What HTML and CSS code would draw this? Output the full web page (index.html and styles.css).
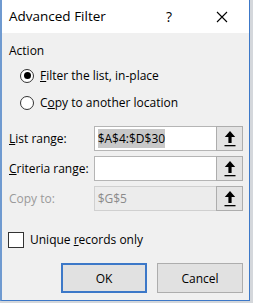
FILE: index.html
```html
<!DOCTYPE html>
<html lang="en">
<head>
    <meta charset="UTF-8">
    <title>Advanced Filter</title>
    <link rel="stylesheet" href="styles.css">
</head>
<body>
    <div class="dialog">
        <div class="titlebar">
            <span class="title">Advanced Filter</span>
            <span class="help">?</span>
            <svg class="close" width="12" height="12" viewBox="0 0 12 12">
                <path d="M1 1 L11 11 M11 1 L1 11" stroke="#000" stroke-width="1.1" fill="none"/>
            </svg>
        </div>

        <div class="content">
            <div class="group">
                <div class="group-label">Action</div>
                <label class="radio-row">
                    <span class="radio checked"></span>
                    <span><u>F</u>ilter the list, in-place</span>
                </label>
                <label class="radio-row">
                    <span class="radio"></span>
                    <span>C<u>o</u>py to another location</span>
                </label>
            </div>

            <div class="field-row">
                <span class="field-label"><u>L</u>ist range:</span>
                <div class="field">
                    <span class="field-input"><span class="selected">$A$4:$D$30</span></span>
                    <span class="pick"><svg width="12" height="17" viewBox="0 0 12 17"><path d="M6 1 L0.8 7 H4.4 V13 H7.6 V7 H11.2 Z" fill="#000"/><rect x="0.5" y="15" width="11" height="1.3" fill="#000"/></svg></span>
                </div>
            </div>
            <div class="field-row">
                <span class="field-label"><u>C</u>riteria range:</span>
                <div class="field">
                    <span class="field-input"></span>
                    <span class="pick"><svg width="12" height="17" viewBox="0 0 12 17"><path d="M6 1 L0.8 7 H4.4 V13 H7.6 V7 H11.2 Z" fill="#000"/><rect x="0.5" y="15" width="11" height="1.3" fill="#000"/></svg></span>
                </div>
            </div>
            <div class="field-row disabled">
                <span class="field-label">Copy to:</span>
                <div class="field">
                    <span class="field-input">$G$5</span>
                    <span class="pick"><svg width="12" height="17" viewBox="0 0 12 17"><path d="M6 1 L0.8 7 H4.4 V13 H7.6 V7 H11.2 Z" fill="#000"/><rect x="0.5" y="15" width="11" height="1.3" fill="#000"/></svg></span>
                </div>
            </div>

            <label class="check-row">
                <span class="checkbox"></span>
                <span>Unique <u>r</u>ecords only</span>
            </label>

            <div class="buttons">
                <span class="button default">OK</span>
                <span class="button">Cancel</span>
            </div>
        </div>
    </div>
</body>
</html>
```

FILE: styles.css
```css
body {
    margin: 0;
    padding: 0;
    background-color: #d4d7db;
    font-family: "Open Sans", "Noto Sans", sans-serif;
    color: #000;
}
.dialog {
    width: 247px;
    height: 300px;
    border-left: 2px solid #6f9ad0;
    border-right: 1px solid #3c78c8;
    border-bottom: 1px solid #3c78c8;
    background-color: #f0f0f0;
    display: flex;
    flex-direction: column;
}
.titlebar {
    height: 33px;
    background-color: #fff;
    display: flex;
    align-items: center;
    padding-left: 7px;
}
.title {
    font-size: 13.5px;
    flex: 1;
    margin-top: -1px;
}
.help {
    font-size: 14px;
    margin-right: 44px;
    margin-top: -1px;
}
.close {
    margin-right: 21px;
}
.content {
    flex: 1;
    padding: 9px 6px 0 6px;
}
.group {
    height: 74px;
    margin-bottom: 7px;
}
.group-label {
    font-size: 12px;
    padding-left: 1px;
    height: 20px;
}
.radio-row {
    display: flex;
    align-items: center;
    gap: 6px;
    font-size: 12px;
    padding-left: 12px;
    height: 27px;
}
.radio {
    width: 12px;
    height: 12px;
    border: 1px solid #333;
    border-radius: 50%;
    background-color: #fff;
    display: flex;
    align-items: center;
    justify-content: center;
}
.radio.checked::after {
    content: "";
    width: 7px;
    height: 7px;
    border-radius: 50%;
    background-color: #000;
}
.field-row {
    display: flex;
    align-items: center;
    height: 30px;
    font-size: 12px;
}
.field-label {
    width: 85px;
    padding-left: 1px;
}
.field {
    display: flex;
    height: 25px;
    width: 150px;
}
.field-input {
    flex: 1;
    background-color: #fff;
    border: 1px solid #b5b5b5;
    border-right: none;
    display: flex;
    align-items: center;
    padding-left: 3px;
    font-size: 12px;
}
.selected {
    background-color: #c8c8c8;
    padding: 1px 0;
}
.pick {
    width: 25px;
    background-color: #e3e3e3;
    border: 1px solid #adadad;
    display: flex;
    align-items: center;
    justify-content: center;
}
.disabled .field-label {
    color: #9a9a9a;
}
.disabled .field-input {
    background-color: #ececec;
    color: #8a8a8a;
    border-color: #d0d0d0;
}
.check-row {
    display: flex;
    align-items: center;
    gap: 6px;
    font-size: 12px;
    height: 17px;
    margin-top: 18px;
}
.checkbox {
    width: 14px;
    height: 14px;
    border: 1px solid #333;
    background-color: #fff;
}
.buttons {
    display: flex;
    justify-content: flex-end;
    gap: 10px;
    margin-top: 15px;
}
.button {
    width: 84px;
    height: 28px;
    border: 1px solid #adadad;
    background-color: #e1e1e1;
    display: flex;
    align-items: center;
    justify-content: center;
    font-size: 12px;
}
.button.default {
    border: 2px solid #3c78c8;
    width: 82px;
    height: 26px;
}
```
